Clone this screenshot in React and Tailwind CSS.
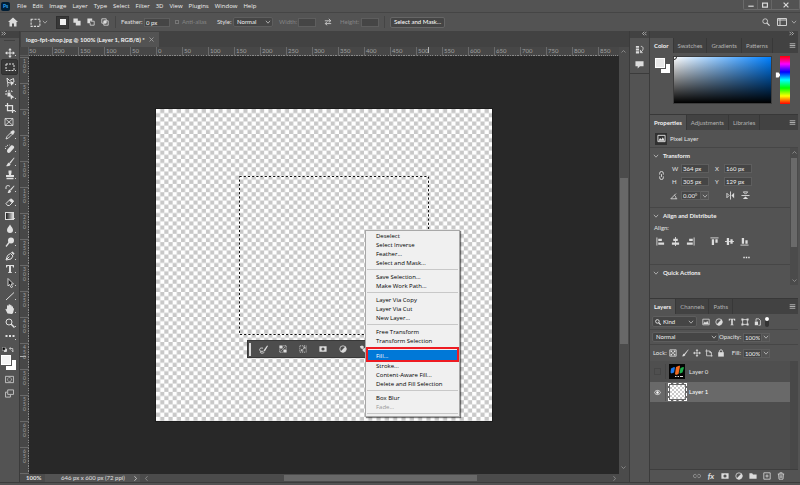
import React from "react";

const checker = "bg-[conic-gradient(#c9c9c9_25%,#fff_0_50%,#c9c9c9_0_75%,#fff_0)]";

function Icon({ size = "size-[10px]", children, className = "" }) {
  return (
    <svg
      viewBox="0 0 20 20"
      className={`${size} shrink-0 ${className}`}
      fill="none"
      stroke="currentColor"
      strokeWidth="2"
      aria-hidden="true"
    >
      {children}
    </svg>
  );
}

const Chevron = ({ className = "text-[#b4b4b4]" }) => (
  <Icon size="size-[6px]" className={className}>
    <path d="M3 6l7 8 7-8" strokeWidth="3" />
  </Icon>
);

const solid = { fill: "currentColor", stroke: "none" };

const glyphs = {
  move: <><path d="M10 3v14M3 10h14" /><path d="M10 0l3.500 4.500h-7zM10 20l3.500-4.500h-7zM0 10l4.500-3.500v7zM20 10l-4.500-3.500v7z" {...solid} /></>,
  marquee: <rect x="2" y="4" width="16" height="13" strokeDasharray="4 2" />,
  lasso: <><path d="M4 2l5 5 8-4 1 7-6 2-7-1z" /><path d="M7 11c-5 1 1 3-2 8" /><path d="M11 7l7 7-3 .5-3 3z" {...solid} /></>,
  object: <><path d="M2 10V2h12v4" strokeDasharray="4 2" /><path d="M5 5h6v8H5z" {...solid} /><path d="M10 8l9 7-4 .5-3 4z" {...solid} /></>,
  crop: <path d="M5 0v15h15M0 5h15v15" strokeWidth="2.500" />,
  frame: <path d="M2 3h16v14H2zM2 3l16 14M18 3L2 17" strokeWidth="1.600" />,
  dropper: <><path d="M2 18l2-5 7-7 3 3-7 7z" strokeWidth="1.800" /><path d="M10 4l6 6 1-2 2-3c1-3-2-5-4-4l-3 2z" {...solid} /></>,
  heal: <><path d="M5 11l7-8c3-2 8 2 6 5l-8 9c-4 3-8-2-5-6z" {...solid} /><path d="M1 10c-1-5 3-8 8-8" strokeDasharray="2 2" /></>,
  brush: <><path d="M18 1L9 11l2 2 8-11z" {...solid} /><path d="M8 11l3 3c0 4-5 5-9 4 3-1 2-6 6-7z" {...solid} /></>,
  stamp: <><path d="M7 1h6v4l-1 5h6v4H2v-4h6L7 5z" {...solid} /><path d="M3 17h14" strokeWidth="3" /></>,
  history: <><path d="M18 3l-8 8 2 2 7-9z" {...solid} /><path d="M9 11l3 3c0 4-4 4-7 4 2-2 1-5 4-7z" {...solid} /><path d="M2 5c3-3 6-2 8 0M2 5v5" /></>,
  eraser: <><path d="M2 13l9-9 6 5-8 8H5z" strokeWidth="2" /><path d="M8 7l6 5 4-4-5-5z" {...solid} /></>,
  drop: <path d="M10 1c3 5 6 7 6 11a6 6 0 01-12 0c0-4 3-6 6-11z" {...solid} />,
  dodge: <><circle cx="12" cy="7" r="6" {...solid} /><path d="M9 10l-7 9" strokeWidth="2.500" /></>,
  pen: <><path d="M2 18l3-9 6-4 5 5-4 6z" /><path d="M12 3l5 5 2-3-4-4z" {...solid} /><path d="M3 17l6-6" /></>,
  type: <path d="M2 2h16v5h-2l-1-3h-3v12l2 1v1H6v-1l2-1V4H5L4 7H2z" {...solid} />,
  arrow: <path d="M6 1l11 11h-5l3 6-3 1-3-6-3 3z" fill="#222" strokeWidth="1.800" />,
  line: <path d="M2 18L18 3" />,
  hand: <path d="M5 19L1 11c0-2 2-2 3 0V4c0-2 2-2 3 0V2c0-2 3-2 3 0v1c0-2 3-2 3 0v2c0-1 3-1 3 1v3c1-1 3 0 2 1l-2 8-2 2z" {...solid} />,
  zoom: <><circle cx="8" cy="8" r="6" /><path d="M12 12l7 7" strokeWidth="3" /></>,
  dots: <path d="M1 8h4v4H1zM8 8h4v4H8zM15 8h4v4h-4z" {...solid} />,
  mask: <path d="M1 3h18v14H1zM10 6a4 4 0 100 8 4 4 0 000-8z" fillRule="evenodd" {...solid} />,
  adjust: <><circle cx="10" cy="10" r="8" /><path d="M16 4A8.500 8.500 0 014 16z" {...solid} /></>,
  image: <><path d="M2 3h16v14H2z" /><path d="M3 15l4-6 3 3 3-5 4 8z" {...solid} /></>,
  shape: <><path d="M4 4h12v12H4z" /><path d="M1 1h5v5H1zM14 1h5v5h-5zM1 14h5v5H1zM14 14h5v5h-5z" {...solid} /></>,
  smart: <><path d="M5 9V2h7l4 4v12h-5" /><path d="M2 9h8v9H2z" {...solid} /></>,
  lock: <><path d="M3 8h14v11H3z" {...solid} /><path d="M6 9V6c0-5 8-5 8 0v3" strokeWidth="2.500" /></>,
  pixels: <><path d="M2 2h16v16H2z" /><path d="M4 4h4v4H4zM12 4h4v4h-4zM8 8h4v4H8zM4 12h4v4H4zM12 12h4v4h-4z" {...solid} /></>,
  artboard: <path d="M4 1v16h15M1 5h11l4 4v10M12 5v4h4" />,
  link: <path d="M8 6H5a4 4 0 000 8h3M12 6h3a4 4 0 010 8h-3M7 10h6" />,
  folder: <path d="M1 3h7l2 3h9v11H1z" {...solid} />,
  plus: <path d="M2 2h16v16H2zM10 6v8M6 10h8" />,
  trash: <path d="M2 5h16M7 4V2h6v2M4 5l1 13h10l1-13M8 8v7M12 8v7" />,
  eye: <><path d="M1 10c4-8 14-8 18 0-4 8-14 8-18 0z" /><circle cx="10" cy="10" r="3.500" {...solid} /></>,
  home: <path d="M10 1l10 9h-3v9h-5v-6H8v6H3v-9H0z" {...solid} />,
  menu: <path d="M2 5h16M2 10h16M2 15h16" />,
  swap: <path d="M2 7h14M12 2l5 5-5 4M18 14H4M8 9l-5 5 5 4" />,
  selAdd: <path d="M1 1h11v6h7v12H7v-7H1z" {...solid} />,
  selSub: <><path d="M1 1h12v6H8v6H1z" {...solid} /><path d="M9 8h9v10H8v-5" /></>,
  selInt: <><path d="M2 2h11v11H2zM7 7h11v11H7z" /><path d="M7 7h6v6H7z" {...solid} /></>,
  angle: <path d="M18 17H2L15 4M11 8c3 2 4 5 4 9" />,
  flipH: <><path d="M10 1v18M2 5v10l5-5z" /><path d="M18 4v12l-6-6z" {...solid} /></>,
  flipV: <><path d="M1 10h18M5 2h10l-5 5z" /><path d="M4 18h12l-6-6z" {...solid} /></>,
  alL: <><path d="M2 1v18" /><path d="M5 4h8v5H5zM5 12h13v5H5z" {...solid} /></>,
  alC: <><path d="M10 0v20" /><path d="M5 4h10v5H5zM2 12h16v5H2z" {...solid} /></>,
  alR: <><path d="M18 1v18" /><path d="M7 4h8v5H7zM2 12h13v5H2z" {...solid} /></>,
  alT: <><path d="M1 2h18" /><path d="M4 5h5v13H4zM12 5h5v8h-5z" {...solid} /></>,
  alM: <><path d="M0 10h20" /><path d="M4 2h5v16H4zM12 5h5v10h-5z" {...solid} /></>,
  alB: <><path d="M1 18h18" /><path d="M4 2h5v13H4zM12 7h5v8h-5z" {...solid} /></>,
};

function IconButton({ name, label, className = "w-3 h-3", size }) {
  return (
    <button aria-label={label || name} className={`flex shrink-0 items-center justify-center text-[#dcdcdc] ${className}`}>
      <Icon size={size}>{glyphs[name]}</Icon>
    </button>
  );
}

const menus = ["File", "Edit", "Image", "Layer", "Type", "Select", "Filter", "3D", "View", "Plugins", "Window", "Help"];

function MenuBar() {
  return (
    <header className="flex h-[13px] items-center border-b border-[#454545] pl-px">
      <div className="flex size-[9px] items-center justify-center rounded-xs bg-[#001e36] text-[5px] font-bold leading-none text-[#31a8ff]">Ps</div>
      <nav className="ml-[7px] flex flex-1 gap-[6px] font-['Open_Sans','Noto_Sans',sans-serif] text-[6px] font-medium text-[#f0f0f0]">
        {menus.map((m) => <button key={m}>{m}</button>)}
      </nav>
      <div className="flex h-[10px] w-[57px] self-start rounded-b-xs border border-t-0 border-[#6a6a6a] text-[#d8d8d8]">
        <button aria-label="Minimize" className="flex w-[14px] items-center justify-center border-r border-[#666]"><Icon size="size-[6px]"><path d="M1 14h18" strokeWidth="4" /></Icon></button>
        <button aria-label="Restore" className="flex w-[14px] items-center justify-center border-r border-[#666]"><Icon size="size-[6px]"><path d="M2 4h16v13H2z" strokeWidth="4" /></Icon></button>
        <button aria-label="Close" className="flex flex-1 items-center justify-center"><Icon size="size-[6px]"><path d="M2 2l16 16M18 2L2 18" strokeWidth="4" /></Icon></button>
      </div>
    </header>
  );
}

const field = "h-[9px] min-w-0 border border-[#5e5e5e] bg-[#454545] px-px text-[6px] leading-none text-[#f0f0f0]";

function Select({ label, value, className = "" }) {
  return (
    <div className={`flex h-[10px] items-center rounded-xs border border-[#5e5e5e] bg-[#454545] pr-px ${className}`}>
      <select aria-label={label} className="h-full min-w-0 flex-1 appearance-none pl-[3px] text-[6px] leading-none text-[#f0f0f0]">
        <option>{value}</option>
      </select>
      <Chevron />
    </div>
  );
}

function OptionsBar() {
  return (
    <div className="flex h-[18px] items-center text-[6px] text-[#e0e0e0]">
      <IconButton name="home" label="Home" className="ml-[7px] h-3 w-3" />
      <IconButton name="marquee" label="Marquee tool" className="ml-[10px] h-3 w-3" size="size-[11px]" />
      <Chevron className="ml-px text-[#aaa]" />
      <div className="ml-2 flex gap-px">
        <button aria-label="New selection" className="flex h-[13px] w-[13px] items-center justify-center border border-[#2f2f2f] bg-[#383838]"><span className="size-[6px] bg-[#f0f0f0]" /></button>
        <IconButton name="selAdd" label="Add to selection" className="h-[13px] w-[13px]" size="size-[8px]" />
        <IconButton name="selSub" label="Subtract from selection" className="h-[13px] w-[13px]" size="size-[8px]" />
        <IconButton name="selInt" label="Intersect with selection" className="h-[13px] w-[13px]" size="size-[8px]" />
      </div>
      <div className="ml-1 h-3 w-px bg-[#454545]" />
      <label htmlFor="feather" className="ml-[5px] w-[23px]">Feather:</label>
      <input id="feather" defaultValue="0 px" className={`${field} w-[26px]`} />
      <input id="aa" type="checkbox" disabled className="ml-[5px] size-1 appearance-none border border-[#777]" />
      <label htmlFor="aa" className="ml-[2px] w-[36px] pl-px text-[#858585]">Anti-alias</label>
      <span className="w-4">Style:</span>
      <Select label="Style" value="Normal" className="w-10" />
      <label htmlFor="ow" className="ml-[6px] w-[19px] text-[#858585]">Width:</label>
      <input id="ow" disabled className={`${field} w-[18px]`} />
      <IconButton name="swap" label="Swap width and height" className="mx-[6px] h-3 w-3" size="size-[8px]" />
      <label htmlFor="oh" className="w-[21px] text-[#858585]">Height:</label>
      <input id="oh" disabled className={`${field} w-[18px]`} />
      <div className="mx-[5px] h-3 w-px bg-[#454545]" />
      <button className="h-[11px] w-[55px] rounded-xs border border-[#666] bg-[#454545] text-[6px] leading-none text-white">Select and Mask...</button>
      <div className="flex-1" />
      <IconButton name="zoom" label="Search" className="h-3 w-3" size="size-[8px]" />
      <button aria-label="Workspace" className="ml-1 flex h-3 w-3 items-center justify-center text-[#d0d0d0]"><Icon><path d="M1 3h18v14H1zM1 6h18M6 3v14" /></Icon></button>
      <Chevron className="mx-[3px] text-[#aaa]" />
    </div>
  );
}

const tools = ["move", "marquee", "lasso", "object", "crop", "frame", "dropper", "heal", "brush", "stamp", "history", "eraser", "gradient", "drop", "dodge", "pen", "type", "arrow", "line", "hand", "zoom", "dots"];

function Toolbar() {
  return (
    <aside className="flex w-5 shrink-0 flex-col border-r border-[#3b3b3b]">
      <div className="h-[7px] bg-[#424242] pl-px text-[#c8c8c8]"><Icon size="size-[5px]"><path d="M2 3l7 7-7 7M11 3l7 7-7 7" strokeWidth="3" /></Icon></div>
      <div className="mx-1 mt-[2px] h-px bg-[#414141]" />
      <div className="mt-[5px] flex h-[297px] flex-col">
        {tools.map((t) => (
          <button key={t} aria-label={t} className={`flex flex-1 items-center justify-center pr-px text-[#e0e0e0] ${t === "marquee" ? "mx-px rounded-xs border border-[#303030] bg-[#383838]" : ""}`}>
            {t === "gradient"
              ? <span className="h-[8px] w-[9px] border border-[#ddd] bg-linear-to-r from-[#222] to-[#ddd]" />
              : <Icon size="size-[10px]">{glyphs[t]}</Icon>}
            {t !== "frame" && <span className="-mr-[2px] mb-[3px] size-px self-end bg-[#d0d0d0]" />}
          </button>
        ))}
      </div>
      <div className="mt-1 flex justify-between px-[2px] pr-[5px]">
        <Icon size="size-[5px]"><path d="M1 1h12v12H1z" fill="#000" stroke="#eee" /><path d="M14 7h5v12H8v-5h6z" fill="#fff" stroke="none" /></Icon>
        <Icon size="size-[5px]" className="text-[#ddd]"><path d="M6 1L1 6l5 5M2 6h13v12M10 14l5 5 5-5" strokeWidth="3" /></Icon>
      </div>
      <div className="mt-[3px] flex">
        <button aria-label="Foreground color" className="z-10 ml-px size-[10px] border border-white bg-[#f3f3f3] shadow-[0_0_0_1px_#555]" />
        <button aria-label="Background color" className="-ml-[5px] mt-[5px] size-[10px] bg-white" />
      </div>
      <button aria-label="Quick mask" className="mt-[5px] flex justify-center text-[#c8c8c8]"><Icon size="size-[9px]"><path d="M1 3h18v14H1z" /><circle cx="10" cy="10" r="4.500" strokeDasharray="2 1" /></Icon></button>
      <button aria-label="Screen mode" className="mt-[5px] flex justify-center text-[#c8c8c8]"><Icon size="size-[9px]"><path d="M6 2h13v10H6zM5 7H1v11h11v-5" /></Icon></button>
    </aside>
  );
}

const hLabels = Array.from({ length: 22 }, (_, i) => Math.abs(i * 50 - 200));
const vLabels = Array.from({ length: 16 }, (_, i) => Math.abs(i * 50 - 100));
const hDots = "h-px bg-[repeating-linear-gradient(90deg,#8a8a8a_0_5%,transparent_5%_10%)]";

function HRuler() {
  return (
    <div className="relative flex h-[9px] bg-[#474747] text-[6px] leading-none text-[#a0a0a0]">
      <div className="w-[9px] shrink-0 border-r border-b border-[#5c5c5c]" />
      <div className="flex w-0 flex-1 overflow-hidden">
        <div className="flex w-[23px] shrink-0 flex-col justify-between">
          <span className="pt-px">50</span>
          <span className={hDots} />
        </div>
        {hLabels.map((n, i) => (
          <div key={i} className="flex w-[26px] shrink-0 flex-col justify-between border-l border-[#6a6a6a] last:w-auto last:flex-1">
            <span className="pl-px pt-px">{n}</span>
            <span className={hDots} />
          </div>
        ))}
      </div>
      <div className="w-[10px] bg-[#4b4b4b] pt-[2px] pl-[2px]"><Icon size="size-[5px]" className="text-[#999]"><path d="M2 14l8-8 8 8" strokeWidth="3" /></Icon></div>
      <span className="absolute left-[408px] top-0 h-[6px] w-px bg-[#b0b0b0]" />
    </div>
  );
}

function VRuler() {
  return (
    <div className="relative w-[9px] shrink-0 bg-[#474747] text-[5px] leading-none text-[#a0a0a0]">
      <div className="h-full overflow-hidden pt-px [contain:size]">
        {vLabels.map((n, i) => (
          <div key={i} className="flex h-[26px] justify-between border-t border-[#6a6a6a]">
            <span className="flex flex-col pl-[3px] pt-px">
              {String(n).split("").map((d, j) => <span key={j} className="h-[5px] leading-[5px]">{d}</span>)}
            </span>
            <span className="w-px bg-[repeating-linear-gradient(#8a8a8a_0_5%,transparent_5%_10%)]" />
          </div>
        ))}
        <div className="border-t border-[#6a6a6a]" />
      </div>
      <span className="absolute left-0 top-[300px] h-px w-[6px] bg-[#b0b0b0]" />
    </div>
  );
}

const contextGroups = [
  ["Deselect", "Select Inverse", "Feather...", "Select and Mask..."],
  ["Save Selection...", "Make Work Path..."],
  ["Layer Via Copy", "Layer Via Cut", "New Layer..."],
  ["Free Transform", "Transform Selection"],
  ["Fill...", "Stroke...", "Content-Aware Fill...", "Delete and Fill Selection"],
  ["Box Blur", "Fade..."],
];

function ContextMenu() {
  return (
    <div role="menu" className="absolute left-[209px] top-[121px] flex h-[187px] w-[95px] flex-col border border-[#a8a8a8] bg-[#f0f0f0] px-px font-['Open_Sans','Noto_Sans',sans-serif] text-[6px] font-medium leading-none text-black shadow-[1px_1px_1px_rgba(0,0,0,0.5)]">
      {contextGroups.map((group) => (
        <React.Fragment key={group[0]}>
          {group.map((item) => (
            <button
              key={item}
              role="menuitem"
              disabled={item === "Fade..."}
              className={`relative flex items-center pl-[9px] text-left ${item === "Fill..." ? "h-[11px] bg-[#0078d7] text-white" : "h-[9px]"} disabled:text-[#999]`}
            >
              {item}
              {item === "Fill..." && <span className="absolute -bottom-px -left-px -right-px -top-[3px] border-2 border-[#ee1b22]" />}
            </button>
          ))}
          <hr className="my-[2px] border-[#c8c8c8]" />
        </React.Fragment>
      ))}
    </div>
  );
}

function TaskBar() {
  return (
    <div className="absolute left-[91px] top-[231px] flex h-[18px] w-[150px] items-center border border-[#383838] bg-[#4d4d4d] pl-px">
      <span className="mr-[6px] h-[13px] w-[2px] bg-[#d8d8d8]" />
      <div className="flex gap-[8px]">
        <button aria-label="Modify selection" className="flex size-3 items-center justify-center text-[#ddd]"><Icon size="size-[9px]"><path d="M18 1l-8 11 3 2 7-12z" {...solid} /><path d="M9 7c-9-2-9 5-5 7h6M4 14c-4 4 4 6 8 2" /></Icon></button>
        <button aria-label="Invert selection" className="flex size-3 items-center justify-center text-[#ddd]"><Icon size="size-[8px]"><path d="M1 1h8v8H1zM11 11h8v8h-8z" {...solid} /><path d="M11 2h7v7M2 11v7h7M6 14l9-9" strokeDasharray="3 1" /></Icon></button>
        <button aria-label="Transform selection" className="flex size-3 items-center justify-center text-[#ccc]"><Icon size="size-[8px]"><path d="M2 2h16v16H2z" strokeDasharray="3 2" /><path d="M6 15l9-10M10 5h5v5M6 10v5h5" /></Icon></button>
        <IconButton name="mask" label="Create mask" size="size-[8px]" />
        <IconButton name="adjust" label="Create adjustment layer" size="size-[8px]" />
        <button aria-label="Fill selection" className="flex size-3 items-center justify-center text-[#ddd]"><Icon size="size-[9px]"><path d="M2 3l5-2 4 3-2 5-5-1z" {...solid} /><path d="M8 9l6-3 5 5-5 6-6-4z" {...solid} /></Icon></button>
      </div>
    </div>
  );
}

function Document() {
  return (
    <main className="flex min-w-0 flex-1 flex-col">
      <div className="flex h-4 bg-[#424242] pl-px">
        <div className="mt-px flex w-[138px] items-center justify-between bg-[#535353] px-[5px] text-[6px] font-bold text-[#f0f0f0]">
          <span className="whitespace-nowrap">logo-fpt-shop.jpg @ 100% (Layer 1, RGB/8) *</span>
          <button aria-label="Close document" className="text-[#aaa]"><Icon size="size-[5px]"><path d="M2 2l16 16M18 2L2 18" strokeWidth="3" /></Icon></button>
        </div>
      </div>
      <HRuler />
      <div className="flex min-h-0 flex-1">
        <VRuler />
        <div className="flex min-w-0 flex-1 items-center justify-center overflow-hidden bg-[#282828]">
          <div className="relative shrink-0 shadow-[0_0_0_1px_#1c1c1c]">
            <svg viewBox="0 0 336 312" className="h-[312px] w-[336px]" role="img" aria-label="Transparent canvas">
              <defs>
                <pattern id="checks" width="8.320" height="8.320" patternUnits="userSpaceOnUse">
                  <rect width="8.320" height="8.320" fill="#fff" />
                  <path d="M4.160 0h4.160v4.160H4.160zM0 4.160h4.160v4.160H0z" fill="#c8c8c8" />
                </pattern>
              </defs>
              <rect width="336" height="312" fill="url(#checks)" />
              <rect x="83.500" y="67.500" width="189" height="158" fill="none" stroke="#fff" />
              <rect x="83.500" y="67.500" width="189" height="158" fill="none" stroke="#111" strokeDasharray="2.200 2" />
            </svg>
            <TaskBar />
            <ContextMenu />
          </div>
        </div>
        <div className="flex w-[10px] shrink-0 flex-col bg-[#4b4b4b]">
          <div className="mx-px mb-auto mt-[122px] h-[166px] bg-[#686868]" />
          <div className="mb-1 ml-[2px]"><Icon size="size-[5px]" className="text-[#999]"><path d="M2 6l8 8 8-8" strokeWidth="3" /></Icon></div>
        </div>
      </div>
      <footer className="flex h-2 items-center bg-[#4b4b4b] text-[6px] leading-none text-[#e0e0e0]">
        <span className="w-[25px] pl-[6px] font-bold">100%</span>
        <div className="flex h-full w-[95px] items-center justify-between bg-[#535353] pl-4 pr-[2px]">
          <span className="whitespace-nowrap">646 px x 600 px (72 ppi)</span>
          <Icon size="size-[5px]"><path d="M6 1l8 9-8 9" strokeWidth="3" /></Icon>
        </div>
        <Icon size="size-[5px]" className="ml-1 text-[#999]"><path d="M14 1l-8 9 8 9" strokeWidth="3" /></Icon>
        <div className="flex h-[6px] flex-1 px-[135px]"><div className="flex-1 bg-[#686868]" /></div>
        <Icon size="size-[5px]" className="mr-3 text-[#999]"><path d="M6 1l8 9-8 9" strokeWidth="3" /></Icon>
      </footer>
    </main>
  );
}

function Tabs({ tabs }) {
  return (
    <div className="flex h-[15px] shrink-0 items-stretch bg-[#424242] text-[6px] text-[#b4b4b4]">
      {tabs.map((t, i) => (
        <button key={t} className={`border-r border-[#383838] px-[4px] ${i === 0 ? "bg-[#535353] font-bold text-[#f2f2f2]" : ""}`}>{t}</button>
      ))}
      <div className="flex-1" />
      <IconButton name="menu" label="Panel menu" className="w-3" size="size-[7px]" />
    </div>
  );
}

function ColorPanel() {
  return (
    <section className="flex h-[77px] flex-col border-b border-[#383838]">
      <Tabs tabs={["Color", "Swatches", "Gradients", "Patterns"]} />
      <div className="flex pr-2 pt-[3px]">
        <div className="flex w-[23px] shrink-0 pl-[5px] pt-[2px]">
          <button aria-label="Foreground" className="z-10 size-[10px] shrink-0 border border-white bg-[#e8e8e8] shadow-[0_0_0_1px_#555]" />
          <button aria-label="Background" className="-ml-1 mt-[6px] size-[9px] shrink-0 bg-white" />
        </div>
        <div className="h-12 flex-1 overflow-hidden border border-[#3c3c3c] bg-[linear-gradient(to_bottom,transparent,#000),linear-gradient(to_right,#fff,#0080ff)]">
          <div className="-ml-[3px] -mt-[3px] size-[6px] rounded-full border border-[#222]" />
        </div>
        <div className="w-[8px] pl-[3px] pt-[16px]"><Icon size="size-[6px]"><path d="M3 2h9l6 8-6 8H3z" fill="#fff" stroke="none" /></Icon></div>
        <div className="h-12 w-[10px] bg-[linear-gradient(to_bottom,#f00,#f0f,#00f,#0ff,#0f0,#ff0,#f00)]" />
      </div>
    </section>
  );
}

function Field({ id, label, value }) {
  return (
    <div className="flex w-[43px] items-center">
      <label htmlFor={id} className="w-[9px]">{label}</label>
      <input id={id} defaultValue={value} className={`${field} w-7`} />
    </div>
  );
}

function SectionTitle({ children }) {
  return (
    <h3 className="flex h-4 items-center gap-[4px] pl-[3px] text-[6px] font-bold text-[#f0f0f0]"><Chevron />{children}</h3>
  );
}

function PropertiesPanel() {
  return (
    <section className="flex h-[184px] flex-col border-b border-[#383838]">
      <Tabs tabs={["Properties", "Adjustments", "Libraries"]} />
      <div className="flex h-[18px] shrink-0 items-center gap-[3px] border-b border-[#464646] pl-[5px] text-[6px]">
        <span className="flex size-3 items-center justify-center bg-[#303030]"><Icon size="size-[9px]">{glyphs.image}</Icon></span>
        Pixel Layer
      </div>
      <div className="flex h-[137px]">
        <div className="min-w-0 flex-1 text-[6px]">
          <div className="h-[60px] border-b border-[#464646]">
            <SectionTitle>Transform</SectionTitle>
            <div className="flex items-center">
              <div className="flex w-[22px] justify-center"><Icon size="size-[9px]" className="rotate-90">{glyphs.link}</Icon></div>
              <div className="flex flex-col gap-1">
                <div className="flex"><Field id="pw" label="W" value="364 px" /><Field id="pxx" label="X" value="160 px" /></div>
                <div className="flex"><Field id="ph" label="H" value="305 px" /><Field id="pyy" label="Y" value="129 px" /></div>
              </div>
            </div>
            <div className="mt-[5px] flex items-center pl-5">
              <Icon size="size-[8px]" className="mr-[3px]">{glyphs.angle}</Icon>
              <input aria-label="Angle" defaultValue="0.00°" className={`${field} w-5`} />
              <span className="flex h-[9px] w-2 items-center justify-center border border-l-0 border-[#666]"><Chevron /></span>
              <IconButton name="flipH" label="Flip horizontal" className="ml-[17px] size-[9px]" size="size-[9px]" />
              <IconButton name="flipV" label="Flip vertical" className="ml-[6px] size-[9px]" size="size-[9px]" />
            </div>
          </div>
          <div className="h-[57px] border-b border-[#464646]">
            <SectionTitle>Align and Distribute</SectionTitle>
            <p className="pl-1 leading-[8px]">Align:</p>
            <div className="mt-[5px] flex gap-[6px] pl-[6px]">
              {["alL", "alC", "alR"].map((n) => <IconButton key={n} name={n} className="size-[9px]" size="size-[9px]" />)}
              <span className="w-[3px]" />
              {["alT", "alM", "alB"].map((n) => <IconButton key={n} name={n} className="size-[9px]" size="size-[9px]" />)}
            </div>
            <div className="mt-[8px] flex justify-end pr-10"><Icon size="size-[7px]" className="text-[#eee]">{glyphs.dots}</Icon></div>
          </div>
          <SectionTitle>Quick Actions</SectionTitle>
        </div>
        <div className="flex w-2 flex-col items-center justify-between bg-[#4b4b4b] py-[2px] text-[#999]">
          <Icon size="size-[5px]"><path d="M2 14l8-8 8 8" strokeWidth="3" /></Icon>
          <div className="mt-[3px] h-[89px] w-[6px] bg-[#6a6a6a]" />
          <div className="flex-1" />
          <Icon size="size-[5px]"><path d="M2 6l8 8 8-8" strokeWidth="3" /></Icon>
        </div>
      </div>
    </section>
  );
}

function Percent({ id, label }) {
  return (
    <>
      <label htmlFor={id} className="w-[24px] shrink-0 pr-[2px] text-right">{label}</label>
      <input id={id} defaultValue="100%" className={`${field} w-[19px] shrink-0`} />
      <span className="flex h-[9px] w-2 shrink-0 items-center justify-center border border-l-0 border-[#5e5e5e]"><Chevron /></span>
    </>
  );
}

function LayersPanel() {
  const row = "flex shrink-0 items-center border-b border-[#464646] pl-[2px]";
  return (
    <section className="flex min-h-0 flex-1 flex-col text-[6px]">
      <Tabs tabs={["Layers", "Channels", "Paths"]} />
      <div className={`${row} h-4`}>
        <div className="flex h-[11px] w-[45px] items-center rounded-xs border border-[#5e5e5e] bg-[#454545] px-[2px]">
          <Icon size="size-[6px]"><circle cx="8" cy="8" r="6" strokeWidth="3" /><path d="M12 12l7 7" strokeWidth="4" /></Icon>
          <select aria-label="Filter kind" className="min-w-0 flex-1 appearance-none pl-[2px] text-[#f0f0f0]"><option>Kind</option></select>
          <Chevron />
        </div>
        <div className="ml-[3px] flex gap-px">
          {["image", "adjust", "type", "shape", "smart"].map((n) => <IconButton key={n} name={n} size="size-[8px]" />)}
        </div>
        <button aria-label="Toggle filter" className="ml-px flex h-[10px] w-1 items-start rounded-full bg-[#333]"><span className="block size-1 rounded-full bg-white" /></button>
      </div>
      <div className={`${row} h-[15px]`}>
        <Select label="Blend mode" value="Normal" className="w-[67px]" />
        <Percent id="opacity" label="Opacity:" />
      </div>
      <div className="flex h-4 shrink-0 items-center pl-[3px]">
        <span className="w-[14px]">Lock:</span>
        <div className="flex w-[52px]">
          {["pixels", "brush", "move", "artboard", "lock"].map((n) => <IconButton key={n} name={n} label={`Lock ${n}`} size="size-[8px]" />)}
        </div>
        <div className="flex w-[51px] items-center"><Percent id="fill" label="Fill:" /></div>
      </div>
      <div className="flex min-h-0 flex-1">
        <div className="flex-1 bg-[#4d4d4d]">
          <div className="flex h-[21px] items-center bg-[#4f4f4f]">
            <div className="flex w-[15px] justify-center"><button aria-label="Show Layer 0" className="size-[7px] border border-[#464646]" /></div>
            <div className="flex w-[23px] justify-center border-l border-[#464646]">
              <svg viewBox="0 0 32 30" className="h-[15px] w-[16px]">
                <rect width="32" height="30" fill="#050505" />
                <path d="M4 9l6-3 2 1-2 10-5 2-2-2z" fill="#1d78e8" />
                <path d="M14 6l7-3 1 2-3 15-5 2-2-2z" fill="#f26a21" />
                <path d="M23 8l5-2 2 1-3 10-5 2-1-2z" fill="#1fae4b" />
                <path d="M12 25h3M17 25h3M22 25h6" stroke="#ddd" strokeWidth="2" />
              </svg>
            </div>
            <span className="pl-px">Layer 0</span>
          </div>
          <div className="flex h-[20px] items-center bg-[#696969]">
            <button aria-label="Hide Layer 1" className="flex w-[15px] justify-center text-white"><Icon size="size-[7px]">{glyphs.eye}</Icon></button>
            <div className="flex w-[23px] justify-center border-l border-[#565656]">
              <span className="border border-dashed border-white p-px"><span className={`block h-[14px] w-[15px] bg-size-[4px_4px] ${checker}`} /></span>
            </div>
            <span className="pl-px text-white">Layer 1</span>
          </div>
        </div>
        <div className="w-2 bg-[#484848]" />
      </div>
      <div className="flex h-[13px] shrink-0 items-center justify-end gap-[2px] border-t border-[#3e3e3e] pr-[11px]">
        <IconButton name="link" label="Link layers" size="size-[8px]" className="h-3 w-3 opacity-50" />
        <button aria-label="Layer style" className="w-3 text-[8px] font-bold italic leading-none text-[#e0e0e0]">fx</button>
        {["mask", "adjust", "folder", "plus", "trash"].map((n) => <IconButton key={n} name={n} size="size-[8px]" />)}
      </div>
    </section>
  );
}

export default function App() {
  return (
    <div className="flex h-screen min-h-[485px] flex-col bg-[#535353] pb-[2px] font-[Lato,'Open_Sans',sans-serif] leading-none text-[#e4e4e4]">
      <MenuBar />
      <OptionsBar />
      <div className="flex min-h-0 flex-1 border-b border-[#3b3b3b]">
        <Toolbar />
        <Document />
        <aside className="flex w-[21px] shrink-0 flex-col border-x border-[#3b3b3b]">
          <div className="flex h-[7px] justify-end bg-[#424242] pr-[2px] text-[#c8c8c8]"><Icon size="size-[5px]"><path d="M9 3l-7 7 7 7M18 3l-7 7 7 7" strokeWidth="3" /></Icon></div>
          <div className="flex h-9 flex-col items-center justify-end gap-[6px] border-b border-[#3b3b3b] pb-1 text-[#ddd]">
            <button aria-label="History"><Icon size="size-[9px]"><path d="M2 2h7v4H2zM2 8h7v4H2zM2 14h7v5H2z" fill="currentColor" strokeWidth="0" /><path d="M13 3c6 0 6 6 3 10l-3 3M12 11v6h5" /></Icon></button>
            <button aria-label="Comments"><Icon size="size-[9px]"><path d="M1 3h18v11h-8l-5 5v-5H1z" {...solid} /></Icon></button>
          </div>
        </aside>
        <aside className="flex w-[150px] shrink-0 flex-col pr-[2px]">
          <div className="flex h-[7px] shrink-0 justify-end bg-[#424242] pr-1 text-[#c8c8c8]"><Icon size="size-[5px]"><path d="M2 3l7 7-7 7M11 3l7 7-7 7" strokeWidth="3" /></Icon></div>
          <ColorPanel />
          <PropertiesPanel />
          <LayersPanel />
        </aside>
      </div>
    </div>
  );
}
